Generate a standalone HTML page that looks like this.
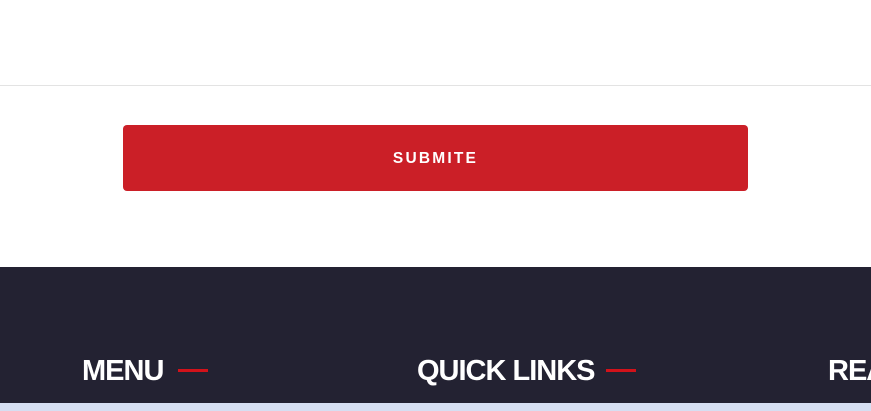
<!DOCTYPE html>
<html><head><style>
*{margin:0;padding:0;box-sizing:border-box}
body{width:871px;height:411px;overflow:hidden;background:#fff;font-family:"Liberation Sans",sans-serif;position:relative}
.line{position:absolute;left:0;top:85px;width:871px;height:1px;background:#e3e3e3}
.btn{position:absolute;left:123px;top:125px;width:625px;height:66px;background:#cb1f27;border-radius:4px;color:#fff;font-weight:bold;font-size:15.5px;letter-spacing:2.2px;text-align:center;line-height:68px}
.dark{position:absolute;left:0;top:267px;width:871px;height:136px;background:#232232}
.strip{position:absolute;left:0;top:403px;width:871px;height:8px;background:#d6dff2}
.h{position:absolute;top:353px;color:#fff;font-weight:bold;font-size:29px;letter-spacing:-1px;line-height:36px}
.bar{position:absolute;top:369px;width:30px;height:3px;background:#d2121a}
</style></head><body>
<div class="line"></div>
<div class="btn">SUBMITE</div>
<div class="dark"></div>
<div class="h" style="left:82px">MENU</div>
<div class="bar" style="left:178px"></div>
<div class="h" style="left:417px">QUICK LINKS</div>
<div class="bar" style="left:606px"></div>
<div class="h" style="left:828px">REA</div>
<div class="strip"></div>
</body></html>
